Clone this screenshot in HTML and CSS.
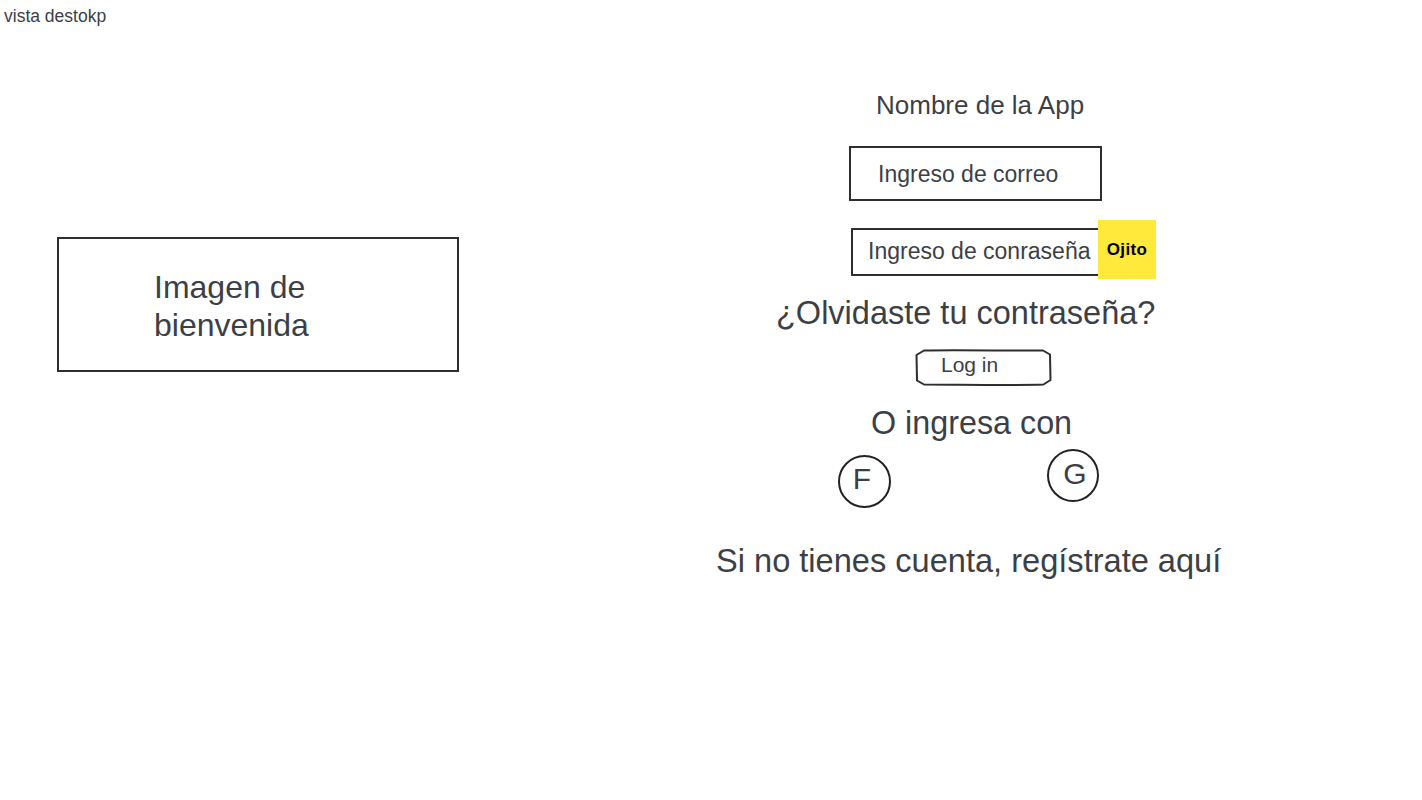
FILE: index.html
```html
<!DOCTYPE html>
<html lang="es">
<head>
<meta charset="utf-8">
<title>vista destokp</title>
<link rel="stylesheet" href="styles.css">
</head>
<body>
<header class="title">vista destokp</header>
<main class="canvas">
  <section class="left">
    <div class="image-box"><span class="image-text">Imagen de bienvenida</span></div>
  </section>
  <section class="right">
    <h1 class="app-name">Nombre de la App</h1>
    <div class="field field-email">Ingreso de correo</div>
    <div class="pass-row">
      <div class="field field-pass">Ingreso de conraseña</div>
      <div class="eye">Ojito</div>
    </div>
    <p class="forgot">¿Olvidaste tu contraseña?</p>
    <div class="login">
      <svg class="login-outline" width="137" height="37" viewBox="0 0 137 37" aria-hidden="true">
        <path d="M9,1.5 C40,0.5 100,2 128,1.5 L135,5.5 L135.5,31 L128.5,35.5 C100,36.5 40,35.5 9,35.5 L2,31.5 L1.5,6 Z" fill="none" stroke="#2e2e2e" stroke-width="2" stroke-linejoin="round"/>
      </svg>
      <span class="login-text">Log in</span>
    </div>
    <p class="alt">O ingresa con</p>
    <div class="social">
      <div class="circle circle-f">F</div>
      <div class="circle circle-g">G</div>
    </div>
    <p class="register">Si no tienes cuenta, regístrate aquí</p>
  </section>
</main>
</body>
</html>
```
FILE: styles.css
```css
* { box-sizing: border-box; }

body {
  margin: 0;
  background: #ffffff;
  color: #3c3f45;
  font-family: "Liberation Sans", Arial, sans-serif;
}

.title {
  padding: 6px 0 0 4px;
  font-size: 17.5px;
  line-height: 20px;
  height: 25px;
}

.canvas {
  display: flex;
  align-items: flex-start;
}

.left {
  width: 700px;
  flex: none;
}

.image-box {
  margin: 212px 0 0 57px;
  width: 402px;
  height: 135px;
  border: 2px solid #2e2e2e;
  padding: 30px 0 0 95px;
}

.image-text {
  display: block;
  width: 180px;
  font-size: 32px;
  line-height: 37.5px;
}

.right {
  display: flex;
  flex-direction: column;
  align-items: flex-start;
}

.app-name {
  margin: 65px 0 0 176px;
  font-size: 26px;
  line-height: 30px;
  font-weight: normal;
}

.field {
  display: flex;
  align-items: center;
  border: 2px solid #2e2e2e;
  font-size: 23px;
}

.field-email {
  margin: 26px 0 0 149px;
  width: 253px;
  height: 55px;
  padding: 2px 0 0 27px;
}

.pass-row {
  display: flex;
  align-items: flex-start;
  margin: 19px 0 0 151px;
}

.field-pass {
  margin-top: 8px;
  width: 247px;
  height: 48px;
  border-right: none;
  padding: 0 0 2px 15px;
}

.eye {
  width: 58px;
  height: 59px;
  background: #ffea3b;
  color: #000000;
  font-weight: bold;
  font-size: 17px;
  letter-spacing: 0.4px;
  display: flex;
  align-items: center;
  justify-content: center;
}

.forgot {
  margin: 16px 0 0 76px;
  font-size: 32.5px;
  line-height: 36px;
}

.login {
  position: relative;
  margin: 18px 0 0 215px;
  width: 137px;
  height: 37px;
  display: flex;
  align-items: center;
  padding: 0 0 5px 26px;
  font-size: 21px;
}

.login-outline {
  position: absolute;
  left: 0;
  top: 0;
}

.login-text { position: relative; }

.alt {
  margin: 19px 0 0 171px;
  font-size: 32.3px;
  line-height: 36px;
}

.social {
  display: flex;
  align-items: flex-start;
  margin: 8px 0 0 138px;
}

.circle {
  width: 53px;
  height: 53px;
  border: 2px solid #222222;
  border-radius: 50%;
  display: flex;
  align-items: center;
  justify-content: center;
  font-size: 30px;
  line-height: 30px;
}

.circle-f {
  margin-top: 6px;
  padding: 0 5px 6px 0;
}

.circle-g {
  margin-left: 156px;
  width: 52px;
  padding: 0 0 4px 4px;
}

.register {
  margin: 35px 0 0 16px;
  font-size: 32.6px;
  line-height: 36px;
}
```
